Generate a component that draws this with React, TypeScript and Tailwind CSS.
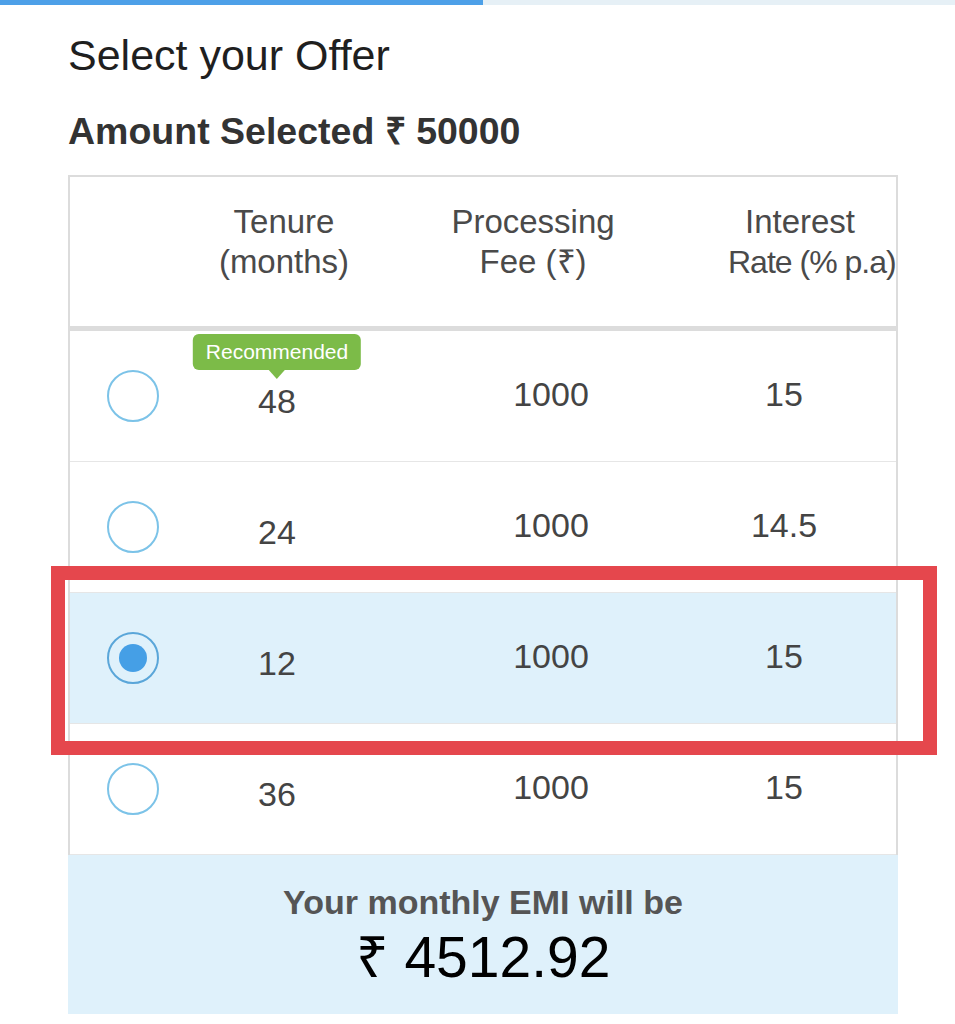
import React from "react";

type Offer = { tenure: string; fee: string; rate: string; recommended?: boolean };

const offers: Offer[] = [
  { tenure: "48", fee: "1000", rate: "15", recommended: true },
  { tenure: "24", fee: "1000", rate: "14.5" },
  { tenure: "12", fee: "1000", rate: "15" },
  { tenure: "36", fee: "1000", rate: "15" },
];

const Radio = ({ checked }: { checked: boolean }) => (
  <div
    className={
      checked
        ? "w-[52px] h-[52px] rounded-full border-2 border-[#5aa6d9] flex items-center justify-center"
        : "w-[52px] h-[52px] rounded-full border-2 border-[#7cc3e8]"
    }
  >
    {checked && <div className="w-[28px] h-[28px] rounded-full bg-[#459fe6]" />}
  </div>
);

const OfferRow = ({ offer, selected }: { offer: Offer; selected: boolean }) => (
  <div
    className={`flex items-center h-[131px] border-b border-[#e6e6e6] text-[34px] text-[#444] ${
      selected ? "bg-[#dff1fb]" : "bg-white"
    }`}
  >
    <div className="w-[126px] flex justify-center">
      <Radio checked={selected} />
    </div>
    <div className="relative w-[162px] h-full flex items-center justify-center">
      {offer.recommended && (
        <div className="absolute top-[3px] left-1/2 -translate-x-1/2 flex flex-col items-center">
          <div className="h-[36px] px-[13px] rounded-[6px] bg-[#7cbb48] text-white text-[21px] leading-[36px] whitespace-nowrap">
            Recommended
          </div>
          <div className="w-0 h-0 border-l-[8px] border-r-[8px] border-t-[9px] border-l-transparent border-r-transparent border-t-[#7cbb48]" />
        </div>
      )}
      <span className="mt-[10px]">{offer.tenure}</span>
    </div>
    <div className="w-[386px] text-center mb-[4px]">{offer.fee}</div>
    <div className="w-[80px] text-center mb-[4px]">{offer.rate}</div>
  </div>
);

export default function App() {
  return (
    <div className="relative min-h-[1024px] bg-white font-['Liberation_Sans',Arial,sans-serif] overflow-hidden">
      {/* progress bar */}
      <div className="flex h-[5px]">
        <div className="w-[483px] bg-[#4da0e8]" />
        <div className="flex-1 bg-[#e6f0f6]" />
      </div>

      <div className="px-[68px] pt-[26px]">
        <h1 className="text-[43px] leading-[48px] text-[#1f1f1f]">Select your Offer</h1>
        <h2 className="mt-[30px] text-[37.5px] leading-[44px] font-bold text-[#333]">
          Amount Selected ₹ 50000
        </h2>

        <div className="mt-[22px] w-[830px] border-2 border-b-0 border-[#dcdcdc] overflow-hidden">
          {/* header */}
          <div className="flex pt-[25px] pb-[44px] border-b-[5px] border-[#dcdcdc] text-[33px] leading-[40px] text-[#4a4a4a]">
            <div className="w-[142px] shrink-0" />
            <div className="w-[144px] shrink-0 text-center">
              Tenure
              <br />
              (months)
            </div>
            <div className="w-[354px] shrink-0 text-center">
              Processing
              <br />
              Fee (₹)
            </div>
            <div className="w-[18px] shrink-0" />
            <div className="w-[144px] shrink-0 text-center whitespace-nowrap">
              <div>Interest</div>
              <div className="text-left text-[32px] tracking-[-1px]">Rate (% p.a)</div>
            </div>
          </div>

          {offers.map((o, i) => (
            <OfferRow key={o.tenure} offer={o} selected={i === 2} />
          ))}
        </div>

        {/* EMI summary */}
        <div className="w-[830px] bg-[#dff1fb] pt-[27px] pb-[25px] text-center">
          <p className="text-[34px] leading-[40px] font-bold text-[#555]">Your monthly EMI will be</p>
          <p className="mt-[3px] text-[57px] leading-[64px] text-black">₹ 4512.92</p>
        </div>
      </div>

      {/* red highlight annotation */}
      <div className="absolute left-[51px] top-[566px] w-[886px] h-[189px] border-[14px] border-[#e5474d]" />
    </div>
  );
}
